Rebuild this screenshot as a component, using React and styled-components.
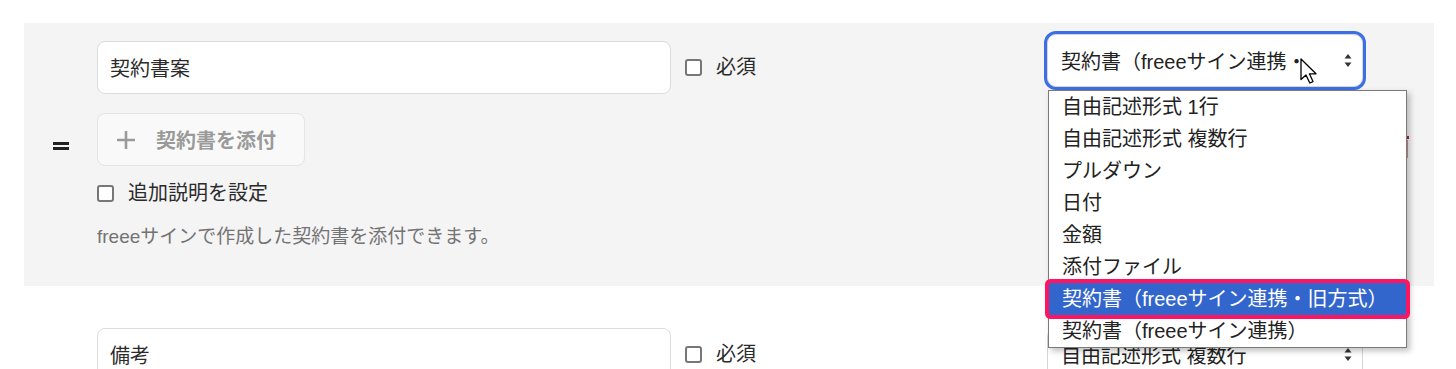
import React from 'react';
import styled, { createGlobalStyle } from 'styled-components';

const GlobalStyle = createGlobalStyle`
  body {
    margin: 0;
    background: #fff;
    font-family: "Liberation Sans", "Noto Sans CJK JP", sans-serif;
    color: #2b2b2b;
  }
`;

const Page = styled.div`
  padding: 23px 22px 0 24px;
  display: flex;
  flex-direction: column;
  gap: 24px;
`;

const Row = styled.div`
  display: flex;
  background: ${(props) => (props.$active ? '#f5f4f5' : 'transparent')};
  padding: 18px 0 ${(props) => (props.$active ? '36px' : '40px')};
`;

const HandleCol = styled.div`
  width: 73px;
  flex-shrink: 0;
  display: flex;
  align-items: center;
  justify-content: center;
`;

const Handle = styled.div`
  display: flex;
  flex-direction: column;
  gap: 2px;
  span {
    display: block;
    width: 16px;
    height: 3px;
    background: #222;
  }
`;

const Content = styled.div`
  flex: 1;
  display: flex;
  flex-direction: column;
`;

const TopLine = styled.div`
  display: flex;
  align-items: flex-start;
`;

const TextInput = styled.input`
  box-sizing: border-box;
  width: 574px;
  height: 53px;
  border: 1px solid #dcdcdc;
  border-radius: 8px;
  background: #fff;
  padding: 0 12px;
  font-family: inherit;
  font-size: 20px;
  color: #2b2b2b;
  outline: none;
`;

const CheckLabel = styled.label`
  display: flex;
  align-items: center;
  gap: 14px;
  font-size: 20px;
  line-height: 26px;
  color: #2b2b2b;
  margin-left: ${(props) => props.$offset || '0'};
  margin-top: ${(props) => props.$top || '0'};
`;

const Check = styled.input`
  appearance: none;
  margin: 0;
  width: 17px;
  height: 17px;
  border: 2px solid #777;
  border-radius: 3px;
  background: #fff;
  box-sizing: border-box;
`;

const AttachButton = styled.button`
  box-sizing: border-box;
  margin-top: 19px;
  width: 208px;
  height: 53px;
  display: flex;
  align-items: center;
  gap: 20px;
  padding: 0 0 0 18px;
  background: #f9f9f9;
  border: 1px solid #e4e4e4;
  border-radius: 8px;
  font-family: inherit;
  font-size: 20px;
  font-weight: bold;
  color: #9a9a9a;
`;

const HelpText = styled.p`
  margin: 18px 0 0;
  font-size: 19px;
  line-height: 26px;
  color: #737373;
`;

const SelectWrap = styled.div`
  position: relative;
  margin-left: auto;
  margin-top: ${(props) => (props.$focused ? '-7px' : '0')};
`;

const SelectBox = styled.div`
  box-sizing: border-box;
  width: 316px;
  height: 53px;
  display: flex;
  align-items: center;
  padding: 0 10px 0 13px;
  background: #fff;
  border: 1px solid #d6d6d6;
  border-radius: 9px;
  box-shadow: ${(props) => (props.$focused ? '0 0 0 3px #3d6fe4' : 'none')};
  font-size: 20px;
  color: #222;
`;

const SelectText = styled.span`
  flex: 1;
  overflow: hidden;
  white-space: nowrap;
  margin-right: 36px;
`;

const Dropdown = styled.ul`
  position: absolute;
  z-index: 5;
  top: calc(100% + 3px);
  left: 1px;
  width: 359px;
  box-sizing: border-box;
  margin: 0;
  padding: 0;
  list-style: none;
  background: #fff;
  border: 1px solid #7a7a7a;
  box-shadow: 3px 3px 6px rgba(0, 0, 0, 0.25);
`;

const Option = styled.li`
  position: relative;
  height: 32px;
  line-height: 32px;
  padding-left: 13px;
  font-size: 20px;
  white-space: nowrap;
  color: ${(props) => (props.$selected ? '#fff' : '#222')};
  background: ${(props) => (props.$selected ? '#3366cc' : 'transparent')};
  box-shadow: ${(props) => (props.$selected ? '0 0 0 4px #ff1462' : 'none')};
  border-radius: ${(props) => (props.$selected ? '2px' : '0')};
  z-index: ${(props) => (props.$selected ? 1 : 0)};
`;

const Cursor = styled.svg`
  position: absolute;
  z-index: 6;
  left: 253px;
  top: 24px;
`;

const TrashCol = styled.div`
  width: 71px;
  flex-shrink: 0;
  box-sizing: border-box;
  padding-right: 25px;
  display: flex;
  align-items: center;
  justify-content: flex-end;
`;

const options = [
  '自由記述形式 1行',
  '自由記述形式 複数行',
  'プルダウン',
  '日付',
  '金額',
  '添付ファイル',
  '契約書（freeeサイン連携・旧方式）',
  '契約書（freeeサイン連携）',
];

const Arrows = () => (
  <svg width="8" height="13" viewBox="0 0 8 13">
    <path d="M4 0 L7.5 4.5 H0.5 Z" fill="#333" />
    <path d="M4 13 L7.5 8.5 H0.5 Z" fill="#333" />
  </svg>
);

const PlusIcon = () => (
  <svg width="20" height="20" viewBox="0 0 20 20">
    <path d="M10 1 V19 M1 10 H19" stroke="#9a9a9a" strokeWidth="2.6" />
  </svg>
);

const TrashIcon = () => (
  <svg width="20" height="24" viewBox="0 0 20 24">
    <path
      d="M7 0 H13 V2 H20 V5 H0 V2 H7 Z M1.5 6 H18.5 V24 H1.5 Z"
      fill="#b8232c"
    />
  </svg>
);

const Select = ({ value, focused, open }) => (
  <SelectWrap $focused={focused}>
    <SelectBox $focused={focused}>
      <SelectText>{value}</SelectText>
      <Arrows />
    </SelectBox>
    {open && (
      <>
        <Dropdown>
          {options.map((o) => (
            <Option key={o} $selected={o === value}>
              {o}
            </Option>
          ))}
        </Dropdown>
        <Cursor width="19" height="26" viewBox="0 0 19 26">
          <path
            d="M1 1 V21.5 L6 17 L9.8 25 L13 23.6 L9.4 15.8 H16 Z"
            fill="#fff"
            stroke="#000"
            strokeWidth="1.3"
            strokeLinejoin="round"
          />
        </Cursor>
      </>
    )}
  </SelectWrap>
);

const App = () => {
  return (
    <>
      <GlobalStyle />
      <Page>
        <Row $active>
          <HandleCol>
            <Handle>
              <span />
              <span />
            </Handle>
          </HandleCol>
          <Content>
            <TopLine>
              <TextInput readOnly defaultValue="契約書案" />
              <CheckLabel $offset="14px" $top="13px">
                <Check type="checkbox" />
                必須
              </CheckLabel>
              <Select
                value="契約書（freeeサイン連携・旧方式）"
                focused
                open
              />
            </TopLine>
            <AttachButton type="button">
              <PlusIcon />
              契約書を添付
            </AttachButton>
            <CheckLabel $top="14px">
              <Check type="checkbox" />
              追加説明を設定
            </CheckLabel>
            <HelpText>freeeサインで作成した契約書を添付できます。</HelpText>
          </Content>
          <TrashCol>
            <TrashIcon />
          </TrashCol>
        </Row>
        <Row>
          <HandleCol />
          <Content>
            <TopLine>
              <TextInput readOnly defaultValue="備考" />
              <CheckLabel $offset="14px" $top="13px">
                <Check type="checkbox" />
                必須
              </CheckLabel>
              <Select value="自由記述形式 複数行" />
            </TopLine>
          </Content>
          <TrashCol />
        </Row>
      </Page>
    </>
  );
};

export default App;
